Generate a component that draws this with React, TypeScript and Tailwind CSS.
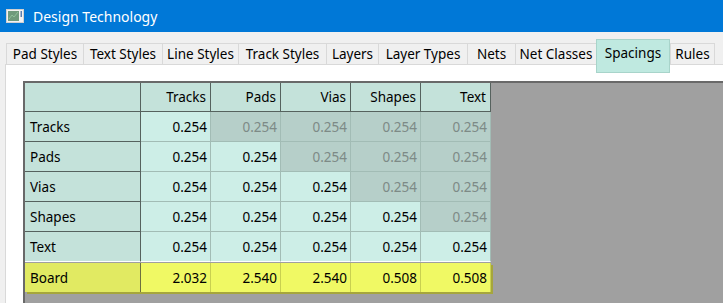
import React from 'react';

type Cell = { value: string; disabled?: boolean };

const COLUMNS = ['Tracks', 'Pads', 'Vias', 'Shapes', 'Text'];

const ROWS: { name: string; cells: Cell[] }[] = [
  { name: 'Tracks', cells: [{ value: '0.254' }, { value: '0.254', disabled: true }, { value: '0.254', disabled: true }, { value: '0.254', disabled: true }, { value: '0.254', disabled: true }] },
  { name: 'Pads', cells: [{ value: '0.254' }, { value: '0.254' }, { value: '0.254', disabled: true }, { value: '0.254', disabled: true }, { value: '0.254', disabled: true }] },
  { name: 'Vias', cells: [{ value: '0.254' }, { value: '0.254' }, { value: '0.254' }, { value: '0.254', disabled: true }, { value: '0.254', disabled: true }] },
  { name: 'Shapes', cells: [{ value: '0.254' }, { value: '0.254' }, { value: '0.254' }, { value: '0.254' }, { value: '0.254', disabled: true }] },
  { name: 'Text', cells: [{ value: '0.254' }, { value: '0.254' }, { value: '0.254' }, { value: '0.254' }, { value: '0.254' }] },
];

const BOARD = ['2.032', '2.540', '2.540', '0.508', '0.508'];

const TABS: { label: string; width: string; active?: boolean }[] = [
  { label: 'Pad Styles', width: 'w-[77px]' },
  { label: 'Text Styles', width: 'w-[79px]' },
  { label: 'Line Styles', width: 'w-[76px]' },
  { label: 'Track Styles', width: 'w-[88px]' },
  { label: 'Layers', width: 'w-[52px]' },
  { label: 'Layer Types', width: 'w-[89px]' },
  { label: 'Nets', width: 'w-[48px]' },
  { label: 'Net Classes', width: 'w-[81px]' },
  { label: 'Spacings', width: 'w-[74px]', active: true },
  { label: 'Rules', width: 'w-[45px]' },
];

const AppIcon = () => (
  <svg width="18" height="14" viewBox="0 0 18 14">
    <rect x="0.5" y="0.5" width="17" height="13" fill="#f2f2f2" stroke="#d0d0d0" />
    <rect x="2" y="2" width="11" height="10" fill="#6f9a7c" />
    <path d="M3 10 L6 6 L8 8 L12 3" stroke="#8fc09a" strokeWidth="1" fill="none" />
    <rect x="14.5" y="2" width="1.5" height="6" fill="#5b7fb0" />
  </svg>
);

export default function App() {
  return (
    <div className="flex h-[303px] w-[723px] flex-col overflow-hidden bg-[#f0f0f0] font-['Noto_Sans',sans-serif] text-[13.5px] text-black">
      {/* Title bar */}
      <div className="flex h-[32px] shrink-0 items-center bg-[#0078d7] pl-[6px] text-white">
        <AppIcon />
        <span className="ml-[9px] text-[14px]">Design Technology</span>
      </div>

      {/* Tab strip */}
      <div className="flex h-[32px] shrink-0 items-end pl-[6px]">
        {TABS.map((tab, i) =>
          tab.active
            ? (
                <div key={tab.label} className={`relative z-10 -mb-[9px] flex h-[34px] ${tab.width} justify-center border border-[#a8d4ca] bg-[#bfe9e0] pt-[3px]`}>
                  {tab.label}
                </div>
              )
            : (
                <div key={tab.label} className={`flex h-[21px] ${tab.width} items-center justify-center border-t border-l border-[#d9d9d9] ${i === TABS.length - 1 ? 'border-r' : ''}`}>
                  {tab.label}
                </div>
              ),
        )}
      </div>

      {/* Tab page */}
      <div className="ml-[5px] flex flex-1 flex-col border-t border-l border-[#d9d9d9] bg-white pt-[16px] pl-[17px]">
        <div className="flex-1 border-t-2 border-l-2 border-[#696969] bg-[#a0a0a0]">
          <div className="grid w-fit grid-cols-[116px_70px_70px_70px_70px_70px]">
            {/* Header row */}
            <div className="h-[29px] border-r border-b border-[#56625e] bg-[#c4e2da]" />
            {COLUMNS.map(col => (
              <div key={col} className="flex h-[29px] items-center justify-end border-r border-b border-[#56625e] bg-[#c4e2da] pt-[1px] pr-[4px]">
                {col}
              </div>
            ))}

            {/* Body rows */}
            {ROWS.map((row, r) => (
              <React.Fragment key={row.name}>
                <div className={`flex h-[30px] items-center border-r border-b border-[#56625e] bg-[#c4e2da] pt-[2px] pl-[5px] ${r === ROWS.length - 1 ? 'border-b-white' : ''}`}>
                  {row.name}
                </div>
                {row.cells.map((cell, c) => (
                  <div
                    key={c}
                    className={`flex h-[30px] items-center justify-end border-r border-b pt-[2px] pr-[3px] ${r === ROWS.length - 1 ? 'border-b-white' : 'border-b-[#a2bcb5]'} border-r-[#a2bcb5] ${cell.disabled ? 'bg-[#b6cfc9] text-[#7d8a86]' : 'bg-[#cdeee7]'}`}
                  >
                    {cell.value}
                  </div>
                ))}
              </React.Fragment>
            ))}

            {/* Board row */}
            <div className="col-span-6 mt-px grid grid-cols-[116px_70px_70px_70px_70px_70px] shadow-[2px_2px_0_0_#a6a63c]">
              <div className="flex h-[29px] items-center border-r border-[#6d7040] bg-[#e1ea62] pt-[2px] pl-[5px]">Board</div>
              {BOARD.map((v, c) => (
                <div key={c} className="flex h-[29px] items-center justify-end border-r border-[#c9d050] bg-[#f0f964] pt-[2px] pr-[3px]">
                  {v}
                </div>
              ))}
            </div>
          </div>
        </div>
      </div>
    </div>
  );
}
